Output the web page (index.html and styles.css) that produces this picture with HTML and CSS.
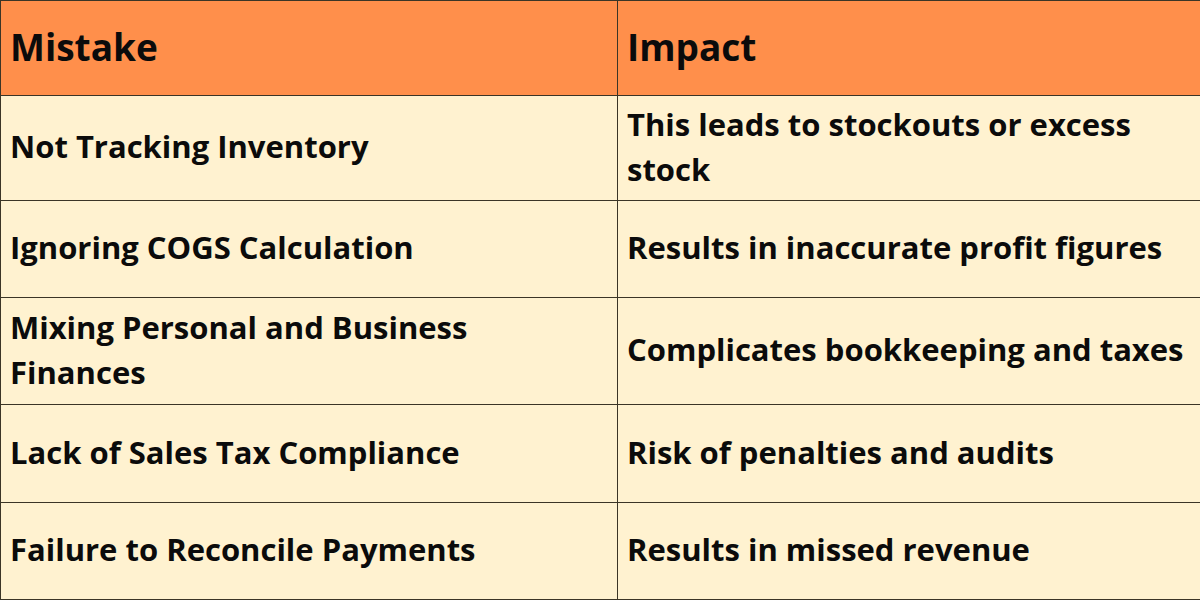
FILE: index.html
```html
<!DOCTYPE html>
<html>
<head>
<meta charset="utf-8">
<link rel="stylesheet" href="styles.css">
</head>
<body>
<table class="grid">
  <colgroup><col class="c1"><col class="c2"></colgroup>
  <thead>
    <tr class="head"><th>Mistake</th><th>Impact</th></tr>
  </thead>
  <tbody>
    <tr class="r1"><td>Not Tracking Inventory</td><td>This leads to stockouts or excess stock</td></tr>
    <tr class="r2"><td>Ignoring COGS Calculation</td><td>Results in inaccurate profit figures</td></tr>
    <tr class="r3"><td>Mixing Personal and Business Finances</td><td>Complicates bookkeeping and taxes</td></tr>
    <tr class="r4"><td>Lack of Sales Tax Compliance</td><td>Risk of penalties and audits</td></tr>
    <tr class="r5"><td>Failure to Reconcile Payments</td><td>Results in missed revenue</td></tr>
  </tbody>
</table>
</body>
</html>
```
FILE: styles.css
```css
html, body { margin: 0; padding: 0; background: #fff2d0; }
.grid {
  width: 1200px;
  height: 600px;
  border-collapse: collapse;
  table-layout: fixed;
  font-family: "Open Sans", "Liberation Sans", sans-serif;
  font-weight: 700;
  color: #0b0b0b;
}
.c1 { width: 617px; }
.c2 { width: 583px; }
.grid th, .grid td {
  border: 1px solid #3b3526;
  padding: 0 9px 3px 9px;
  text-align: left;
  vertical-align: middle;
}
.grid th {
  background: #ff8f4b;
  font-size: 37px;
  font-weight: 700;
  height: 91px;
  line-height: 44px;
}
.grid td {
  background: #fff2d0;
  font-size: 31px;
  line-height: 45px;
}
.r1 td { height: 101px; }
.r2 td { height: 93px; }
.r3 td { height: 103px; }
.r4 td { height: 94px; }
.r5 td { height: 93px; }
```
